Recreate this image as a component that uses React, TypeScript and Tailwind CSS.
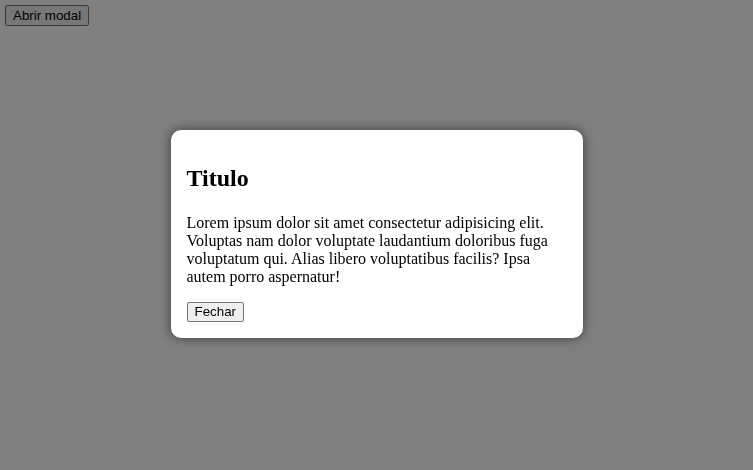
export default function App() {
  return (
    <div className="relative flex h-[470px] w-full items-start bg-[#808080] p-[5px] font-['Liberation_Serif',serif] text-black">
      <button className="rounded-[2px] border border-[#3b3b3b] bg-[#777777] px-[7px] py-[1px] font-['Liberation_Sans',sans-serif] text-[13.33px] leading-[17px] text-black">
        Abrir modal
      </button>

      <div className="fixed inset-0 flex items-center justify-center pb-[2px]">
        <div className="w-[412px] rounded-[10px] bg-white p-4 shadow-[0_0_12px_rgba(0,0,0,0.55)]">
          <h2 className="mt-[19px] mb-[22px] text-[24px] leading-[27px] font-bold">Titulo</h2>
          <p className="mb-4 text-[16px] leading-[18px]">
            Lorem ipsum dolor sit amet consectetur adipisicing elit. Voluptas nam dolor voluptate laudantium
            doloribus fuga voluptatum qui. Alias libero voluptatibus facilis? Ipsa autem porro aspernatur!
          </p>
          <button className="block rounded-[2px] border border-[#767676] bg-[#efefef] px-[7px] py-[1px] font-['Liberation_Sans',sans-serif] text-[13.33px] leading-[16px] text-black">
            Fechar
          </button>
        </div>
      </div>
    </div>
  );
}
